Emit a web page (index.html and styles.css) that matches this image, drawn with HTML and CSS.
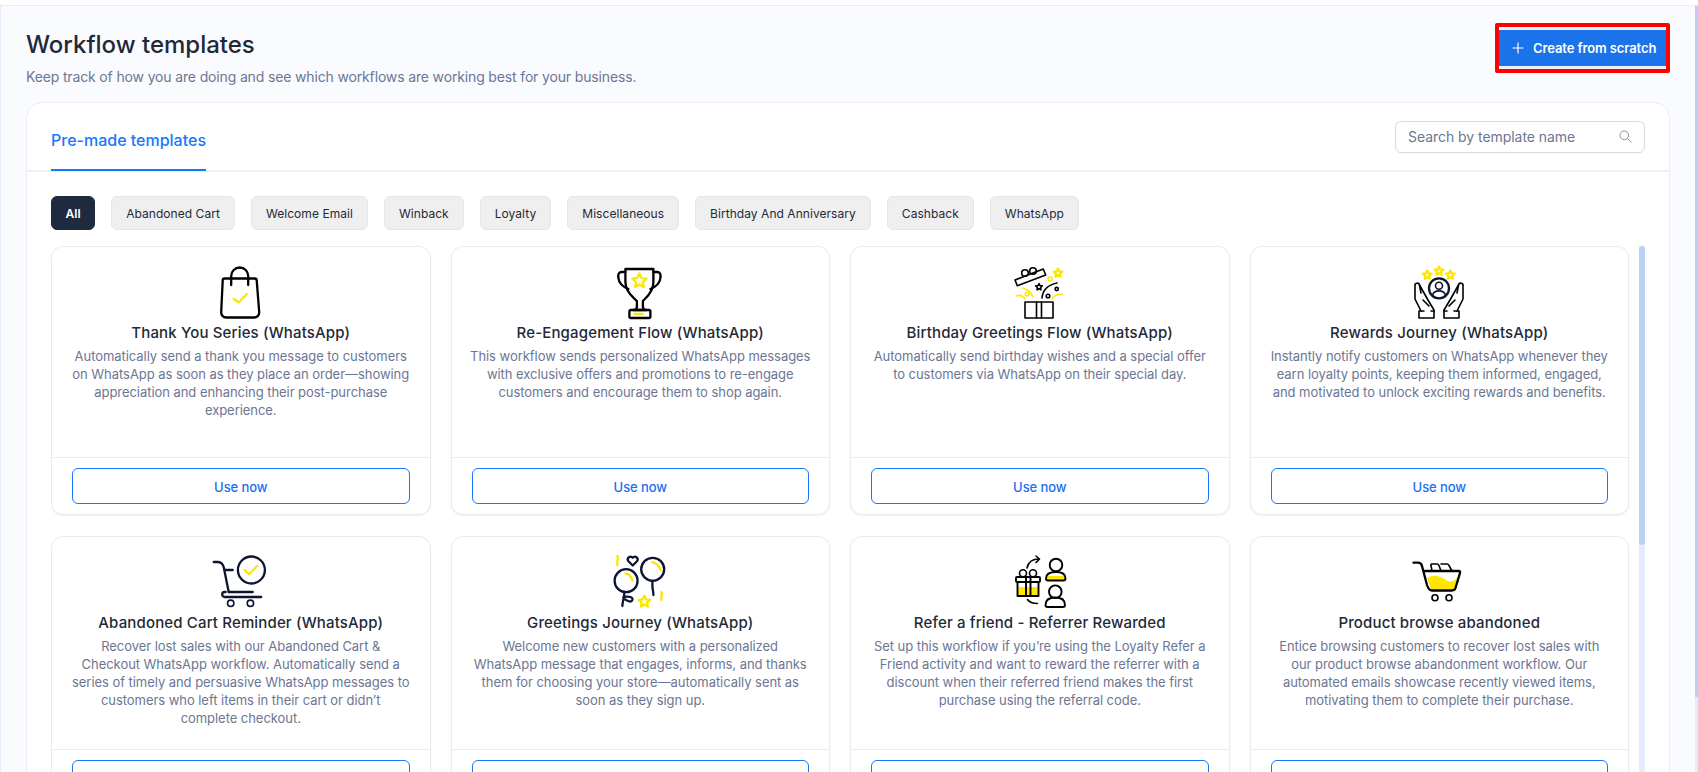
FILE: index.html
```html
<!DOCTYPE html>
<html lang="en">
<head>
  <meta charset="UTF-8" />
  <title>Workflow templates</title>
  <link rel="stylesheet" href="styles.css">
</head>
<body>
  <div class="topbar"></div>

  <div class="page">
    <div class="page-head">
      <div>
        <h1>Workflow templates</h1>
        <p class="subtitle">Keep track of how you are doing and see which workflows are working best for your business.</p>
      </div>
      <div class="create-mark">
        <button class="create-btn">
          <svg width="12" height="12" viewBox="0 0 12 12"><path d="M6 .5v11M.5 6h11" stroke="#fff" stroke-width="1.2" fill="none"/></svg>
          Create from scratch
        </button>
      </div>
    </div>

    <div class="panel">
      <div class="tabs">
        <div class="tab">Pre-made templates</div>
        <div class="search">
          <span>Search by template name</span>
          <svg width="13" height="13" viewBox="0 0 13 13"><circle cx="5.3" cy="5.3" r="4.3" fill="none" stroke="#8a92a3"/><path d="M8.5 8.5l4 4" stroke="#8a92a3" fill="none"/></svg>
        </div>
      </div>

      <div class="panel-body">
        <div class="chips">
          <button class="chip active">All</button>
          <button class="chip">Abandoned Cart</button>
          <button class="chip">Welcome Email</button>
          <button class="chip">Winback</button>
          <button class="chip">Loyalty</button>
          <button class="chip">Miscellaneous</button>
          <button class="chip">Birthday And Anniversary</button>
          <button class="chip">Cashback</button>
          <button class="chip">WhatsApp</button>
        </div>

        <div class="scroller">
          <div class="grid">

            <div class="card">
              <div class="card-body">
                <svg class="icon" viewBox="31.3 9 60 56">
                  <path class="ink" d="M45 23.5H75a2 2 0 0 1 2 2L79.5 57a5 5 0 0 1-5 5.5H46.5a5 5 0 0 1-5-5.5L43 25.5a2 2 0 0 1 2-2Z"/>
                  <path class="ink" d="M51.5 30V21a8.5 8.5 0 0 1 17 0V30"/>
                  <path class="sun" d="M54 44l5 3.500 8-8.500"/>
                </svg>
                <h3>Thank You Series (WhatsApp)</h3>
                <p>Automatically send a thank you message to customers<br>on WhatsApp as soon as they place an order—showing<br>appreciation and enhancing their post-purchase<br>experience.</p>
              </div>
              <div class="card-foot"><button class="use-btn">Use now</button></div>
            </div>

            <div class="card">
              <div class="card-body">
                <svg class="icon" viewBox="30.600 9 60 56">
                  <path class="ink" d="M46 14H74V27C74 38 66 43 63.500 46V52C63.500 53.500 65 55 67 55H54C56 55 57.500 53.500 57.500 52V46C55 43 46 38 46 27Z"/>
                  <path class="ink" d="M46 17H42C39 17 38.500 20 39 23C39.500 28 44 32 49 34"/>
                  <path class="ink" d="M74 17H78C81 17 81.500 20 81 23C80.500 28 76 32 71 34"/>
                  <rect class="ink" x="50" y="55" width="21" height="8" rx="1.500"/>
                  <path class="sun" d="M55 59h8"/>
                  <polygon class="sun" transform="translate(60 26)" points="0,-7.500 2.100,-2.900 7.100,-2.300 3.400,1.100 4.400,6.100 0,3.600 -4.400,6.100 -3.400,1.100 -7.100,-2.300 -2.100,-2.900"/>
                </svg>
                <h3>Re-Engagement Flow (WhatsApp)</h3>
                <p>This workflow sends personalized WhatsApp messages<br>with exclusive offers and promotions to re-engage<br>customers and encourage them to shop again.</p>
              </div>
              <div class="card-foot"><button class="use-btn">Use now</button></div>
            </div>

            <div class="card">
              <div class="card-body">
                <svg class="icon" viewBox="30 9 60 56">
                  <path class="ink thin" d="M35 25L63.300 14L65.700 20L37.300 30.700Z"/>
                  <circle class="ink thin" cx="45" cy="18" r="3.300"/>
                  <circle class="ink thin" cx="53" cy="16" r="3.300"/>
                  <rect class="ink thin" x="45" y="47" width="28" height="16"/>
                  <path class="ink thin" d="M56.500 47v16M61.500 47v16"/>
                  <path class="ink thin" d="M62 43Q63 31 77 28"/>
                  <polygon class="ink thin" transform="translate(59 32)" points="0,-3.500 1,-1.300 3.300,-1.100 1.600,.5 2,2.800 0,1.700 -2,2.800 -1.600,.5 -3.300,-1.100 -1,-1.300"/>
                  <circle class="ink thin" cx="76.700" cy="34" r="1.600"/>
                  <circle class="ink thin" cx="68" cy="41" r="1.800"/>
                  <polygon class="sun" transform="translate(78 18)" points="0,-4.500 1.300,-1.700 4.300,-1.400 2,.7 2.600,3.700 0,2.200 -2.600,3.700 -2,.7 -4.300,-1.400 -1.300,-1.700"/>
                  <circle class="sun thin" cx="70" cy="24" r="2"/>
                  <circle class="sun thin" cx="47" cy="39" r="1.800"/>
                  <path class="sun thin" d="M43 33Q50 35 53 42M36 41Q41 39 45 44M72 44Q75 39 82 39"/>
                </svg>
                <h3>Birthday Greetings Flow (WhatsApp)</h3>
                <p>Automatically send birthday wishes and a special offer<br>to customers via WhatsApp on their special day.</p>
              </div>
              <div class="card-foot"><button class="use-btn">Use now</button></div>
            </div>

            <div class="card">
              <div class="card-body">
                <svg class="icon" viewBox="29 9 60 56">
                  <polygon class="sun" transform="translate(47.300 20)" points="0,-4.500 1.300,-1.700 4.300,-1.400 2,.7 2.600,3.700 0,2.200 -2.600,3.700 -2,.7 -4.300,-1.400 -1.300,-1.700"/>
                  <polygon class="sun" transform="translate(59 16)" points="0,-4.500 1.300,-1.700 4.300,-1.400 2,.7 2.600,3.700 0,2.200 -2.600,3.700 -2,.7 -4.300,-1.400 -1.300,-1.700"/>
                  <polygon class="sun" transform="translate(70.300 20)" points="0,-4.500 1.300,-1.700 4.300,-1.400 2,.7 2.600,3.700 0,2.200 -2.600,3.700 -2,.7 -4.300,-1.400 -1.300,-1.700"/>
                  <circle class="ink navy" cx="59" cy="33.300" r="10"/>
                  <circle class="ink navy thin" cx="59" cy="30.700" r="3.500"/>
                  <path class="ink navy thin" d="M52.500 40c1.500-5.500 11.500-5.500 13 0"/>
                  <g id="hand">
                    <path class="ink thin" d="M41 56L35 44V31A2 2 0 0 1 39.500 30L48 45L54 55V56"/>
                    <path class="ink thin" d="M39.500 30L41 38M43 45L49 51"/>
                    <path class="ink thin" d="M44 56H39v7h15v-7h-3"/>
                  </g>
                  <use href="#hand" transform="translate(118 0) scale(-1 1)"/>
                </svg>
                <h3>Rewards Journey (WhatsApp)</h3>
                <p>Instantly notify customers on WhatsApp whenever they<br>earn loyalty points, keeping them informed, engaged,<br>and motivated to unlock exciting rewards and benefits.</p>
              </div>
              <div class="card-foot"><button class="use-btn">Use now</button></div>
            </div>

            <div class="card">
              <div class="card-body">
                <svg class="icon" viewBox="21.300 4 60 56">
                  <path class="ink navy" d="M24 12H28C31 12 33 14 34 17L39 42"/>
                  <path class="ink navy" d="M35 20H43"/>
                  <circle class="ink navy" cx="61.700" cy="20" r="13.500"/>
                  <path class="sun" d="M55 20l4.300 4.300 8.400-8.600"/>
                  <path class="ink navy" d="M39 42H63"/>
                  <path class="ink navy" d="M36 42h-1a2.500 2.500 0 0 0 0 5H71.500"/>
                  <circle class="ink navy thin" cx="41" cy="53.300" r="3.200"/>
                  <circle class="ink navy thin" cx="60.700" cy="53.300" r="3.200"/>
                </svg>
                <h3>Abandoned Cart Reminder (WhatsApp)</h3>
                <p>Recover lost sales with our Abandoned Cart &amp;<br>Checkout WhatsApp workflow. Automatically send a<br>series of timely and persuasive WhatsApp messages to<br>customers who left items in their cart or didn’t<br>complete checkout.</p>
              </div>
              <div class="card-foot"><button class="use-btn">Use now</button></div>
            </div>

            <div class="card">
              <div class="card-body">
                <svg class="icon" viewBox="30.600 4 60 56">
                  <circle class="ink navy" cx="46.700" cy="30.700" r="11.500"/>
                  <circle class="ink navy" cx="73.300" cy="19.300" r="11.500"/>
                  <path class="sun" d="M46 23.500c3 .5 6 3 7 7M73 12c3 .5 7 4 8 8"/>
                  <path class="ink navy" d="M45 42c0 6-2 9-2 14M44 47c5-1 10 0 9 3s-6 1-9-2M73 31v5c0 3 1 5 1 9"/>
                  <path class="ink navy" d="M53.300 15.500l-4.500-4.500a2.800 2.800 0 0 1 4.500-3.300a2.800 2.800 0 0 1 4.500 3.300Z"/>
                  <polygon class="sun" transform="translate(65 51.700)" points="0,-6 1.700,-2.300 5.700,-1.900 2.700,.9 3.500,4.900 0,2.900 -3.500,4.900 -2.700,.9 -5.700,-1.900 -1.700,-2.300"/>
                  <path class="sun" d="M38 6c1.500 3-1 5 0 9M82 42c1.500 3-1 5 0 8"/>
                </svg>
                <h3>Greetings Journey (WhatsApp)</h3>
                <p>Welcome new customers with a personalized<br>WhatsApp message that engages, informs, and thanks<br>them for choosing your store—automatically sent as<br>soon as they sign up.</p>
              </div>
              <div class="card-foot"><button class="use-btn">Use now</button></div>
            </div>

            <div class="card">
              <div class="card-body">
                <svg class="icon" viewBox="30 4 60 56">
                  <rect class="fill-sun" x="37" y="37" width="22" height="8"/>
                  <path class="fill-sun" d="M66 26h19v2.500a2 2 0 0 1-2 2H68a2 2 0 0 1-2-2z"/>
                  <rect class="ink thick" x="36" y="27" width="24" height="5" rx="1"/>
                  <path class="ink thick" d="M37.500 32V46H58.500V32"/>
                  <path class="ink thick" d="M46 27V46M50.500 27V46"/>
                  <circle class="ink thin" cx="43" cy="23.300" r="3.500"/>
                  <circle class="ink thin" cx="53" cy="23.300" r="3.500"/>
                  <path class="ink thin" d="M47 18c1-5 5-9 12-9M56 6l3.500 3-3.500 3.500M47.500 49.500c2 3 5 4 10 4"/>
                  <circle class="ink thick" cx="76" cy="15" r="6.300"/>
                  <path class="ink thick" d="M66 28.500C66 24 70 22 76 22S85.500 24 85.500 28.500A2 2 0 0 1 83.500 30.500H68A2 2 0 0 1 66 28.500Z"/>
                  <circle class="ink thick" cx="75.300" cy="41.700" r="6.300"/>
                  <path class="ink thick" d="M65.500 55C65.500 50 69.500 47.500 75.300 47.500S85 50 85 55A2 2 0 0 1 83 57H67.500A2 2 0 0 1 65.500 55Z"/>
                </svg>
                <h3>Refer a friend - Referrer Rewarded</h3>
                <p>Set up this workflow if you’re using the Loyalty Refer a<br>Friend activity and want to reward the referrer with a<br>discount when their referred friend makes the first<br>purchase using the referral code.</p>
              </div>
              <div class="card-foot"><button class="use-btn">Use now</button></div>
            </div>

            <div class="card">
              <div class="card-body">
                <svg class="icon" viewBox="29 4 60 56">
                  <path class="fill-sun" d="M47 28C54 24 60 26 66 30S74 30 78.500 27L74 39H51Z"/>
                  <path class="ink" d="M33.500 12.700H38C40 12.700 41.500 14 42 16L47 35C48 38 49 40.500 52 40.500H72C74 40.500 75 39.500 75.500 38L80 23C80.300 22 80 21 79 21H45"/>
                  <path class="ink thin" d="M52 21L51 15.500A1 1 0 0 1 52 14H57C58 14 58.500 14.500 59 15.500L61 21"/>
                  <path class="ink thin" d="M61 14H67C68 14 68.500 14.500 69 15.500L72 21"/>
                  <circle class="ink thin" cx="55" cy="47.700" r="3"/>
                  <circle class="ink thin" cx="69" cy="47.700" r="3"/>
                </svg>
                <h3>Product browse abandoned</h3>
                <p>Entice browsing customers to recover lost sales with<br>our product browse abandonment workflow. Our<br>automated emails showcase recently viewed items,<br>motivating them to complete their purchase.</p>
              </div>
              <div class="card-foot"><button class="use-btn">Use now</button></div>
            </div>

          </div>
          <!-- scrollbar of the card list -->
          <div class="scroll-track"><div class="scroll-thumb inner-thumb"></div></div>
        </div>
      </div>
    </div>

    <!-- scrollbar of the page -->
    <div class="scroll-track page-track"><div class="scroll-thumb page-thumb"></div></div>
  </div>
</body>
</html>
```

FILE: styles.css
```css
/* General Styling */
html,
body {
  margin: 0;
  padding: 0;
  height: 100%;
  overflow: hidden;
  font-family: Inter, "Noto Sans", sans-serif;
  background: #fff;
}

h1,
h3,
p {
  margin: 0;
}

button {
  font-family: inherit;
  cursor: pointer;
}

.topbar {
  height: 5px;
  background: #fff;
  border-bottom: 1px solid #e8ecfa;
}

/* Page */
.page {
  position: relative;
  box-sizing: border-box;
  height: calc(100vh - 6px);
  overflow: hidden;
  padding: 0 28px 8px 25px;
  border-left: 1px solid #e8ecfa;
  background: #fafbff;
}

/* Scrollbars */
.scroll-track {
  position: absolute;
  top: 0;
  right: 0;
  bottom: 0;
  width: 6px;
  background: #e3ecfd;
}

.scroll-thumb {
  background: #bcd0f3;
  border-radius: 3px;
}

.inner-thumb {
  height: 299px;
}

.page-track {
  width: 3px;
}

.page-thumb {
  height: 691px;
  border-radius: 0;
}

.page-head {
  display: flex;
  justify-content: space-between;
  align-items: flex-start;
  height: 96px;
}

h1 {
  margin-top: 23px;
  font-size: 24px;
  line-height: 32px;
  font-weight: 500;
  color: #1f2937;
}

.subtitle {
  margin-top: 6px;
  font-size: 14px;
  line-height: 20px;
  font-weight: 400;
  letter-spacing: -0.15px;
  color: #6c7693;
}

.create-mark {
  margin-top: 17px;
  padding: 3px 0;
  border: 4px solid #f00;
  border-radius: 2px;
  background: #eef1fb;
}

.create-btn {
  display: flex;
  align-items: center;
  gap: 9px;
  width: 167px;
  height: 36px;
  padding: 0 0 0 13px;
  border: none;
  background: #1a73e8;
  color: #fff;
  font-size: 13px;
  font-weight: 600;
  letter-spacing: -0.1px;
}

/* Panel */
.panel {
  border: 1px solid #ebedf2;
  border-radius: 16px;
  background: #fff;
}

.tabs {
  display: flex;
  justify-content: space-between;
  align-items: center;
  height: 67px;
  padding: 0 24px;
  border-bottom: 2px solid #f0f0f0;
}

.tab {
  align-self: flex-end;
  height: 65px;
  margin-bottom: -1px;
  line-height: 73px;
  font-size: 16px;
  font-weight: 500;
  color: #1677ff;
  border-bottom: 2px solid #1677ff;
}

.search {
  box-sizing: border-box;
  display: flex;
  justify-content: space-between;
  align-items: center;
  width: 250px;
  height: 32px;
  padding: 0 12px;
  border: 1px solid #d9d9d9;
  border-radius: 6px;
  font-size: 14px;
  font-weight: 400;
  letter-spacing: -0.05px;
  color: #6c7693;
}

.panel-body {
  padding: 24px 24px 16px;
}

/* Category chips */
.chips {
  display: flex;
  gap: 16px;
  margin-bottom: 16px;
}

.chip {
  height: 34px;
  padding: 0 14px;
  border: 1px solid #e6e6e6;
  border-radius: 6px;
  background: #efefef;
  color: #1f2937;
  font-size: 12px;
  font-weight: 400;
  letter-spacing: 0.05px;
}

.chip.active {
  padding: 0 13.5px;
  border-color: #1e2a3e;
  background: #1e2a3e;
  color: #fff;
  font-weight: 600;
}

/* Template cards */
.scroller {
  position: relative;
  height: 584px;
  overflow: hidden;
}

.grid {
  display: grid;
  grid-template-columns: repeat(4, 1fr);
  align-content: start;
  column-gap: 20px;
  row-gap: 21px;
  padding-right: 16px;
}

.card {
  display: flex;
  flex-direction: column;
  border: 1px solid #ebebeb;
  border-radius: 12px;
  background: #fff;
  box-shadow: 0 1px 2px rgba(0, 0, 0, 0.06);
}

.card-body {
  box-sizing: border-box;
  flex: 1;
  min-height: 210px;
  padding: 17px 0 22px;
  text-align: center;
}

.icon {
  display: block;
  width: 60px;
  height: 56px;
  margin: 0 auto;
}

.ink {
  fill: none;
  stroke: #000;
  stroke-width: 2.3;
  stroke-linecap: round;
  stroke-linejoin: round;
}

.navy {
  stroke: #0d1530;
}

.sun {
  fill: none;
  stroke: #ffe600;
  stroke-width: 2.3;
  stroke-linecap: round;
  stroke-linejoin: round;
}

.thick {
  stroke-width: 1.9;
}

.thin {
  stroke-width: 1.6;
}

.fill-sun {
  fill: #ffe600;
}

.card h3 {
  margin-top: 1px;
  font-size: 15px;
  line-height: 24px;
  font-weight: 500;
  letter-spacing: 0.15px;
  color: #1f2937;
}

.card p {
  margin-top: 2px;
  font-size: 13px;
  line-height: 18px;
  font-weight: 400;
  letter-spacing: -0.05px;
  color: #6c7693;
}

.card-foot {
  padding: 10px 20px;
  border-top: 1px solid #ebebeb;
}

.use-btn {
  width: 100%;
  height: 36px;
  padding: 2px 0 0;
  border: 1px solid #1677ff;
  border-radius: 6px;
  background: #fff;
  color: #1a6fef;
  font-size: 13px;
  font-weight: 500;
  letter-spacing: -0.1px;
}
```
